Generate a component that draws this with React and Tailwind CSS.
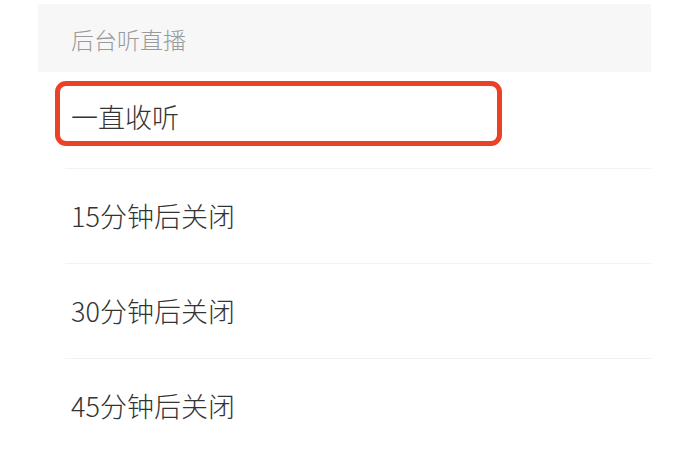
export default function App() {
  const items = ["15分钟后关闭", "30分钟后关闭", "45分钟后关闭"];
  return (
    <div
      className="w-[694px] h-[454px] bg-white overflow-hidden pt-[4px] pl-[38px]"
      style={{ fontFamily: '"Noto Sans CJK SC", "Noto Sans", sans-serif' }}
    >
      <div className="w-[613px]">
        <div className="h-[68px] bg-[#f7f7f7] flex items-center pl-[33px] pt-[3px] text-[23px] font-light text-[#9a9a9a]">
          后台听直播
        </div>
        <div className="h-[96px] pl-[17px] pt-[9px]">
          <div className="w-[447px] h-[65px] border-[5px] border-[#ea4127] rounded-[11px] flex items-center pl-[11px] pt-[8px] text-[27px] font-light text-[#333333]">
            一直收听
          </div>
        </div>
        {items.map((t) => (
          <div key={t} className="pl-[27px]">
            <div className="border-t border-[#f2f2f2] h-[95px] flex items-center pl-[6px] text-[27px] font-light text-[#333333]">
              {t}
            </div>
          </div>
        ))}
      </div>
    </div>
  );
}
